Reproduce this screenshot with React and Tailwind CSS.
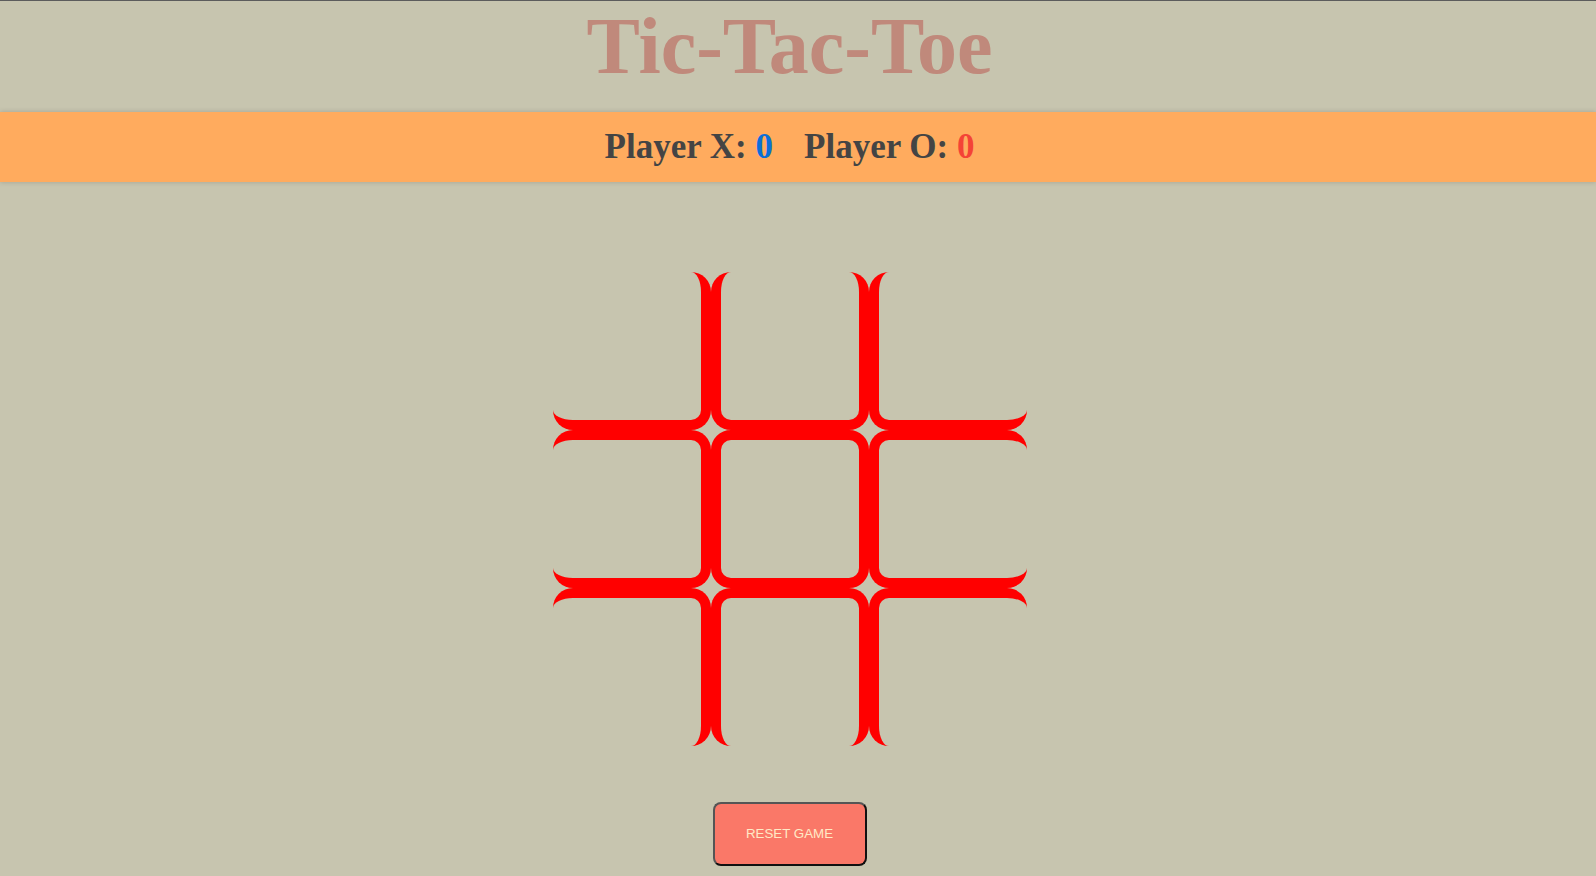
import React, { useState } from "react";

const serif = { fontFamily: '"Liberation Serif", "Times New Roman", serif' };

// which sides of each cell carry the red line
const cellBorders = [
  "border-r-[10px] border-b-[10px]",
  "border-l-[10px] border-r-[10px] border-b-[10px]",
  "border-l-[10px] border-b-[10px]",
  "border-t-[10px] border-r-[10px] border-b-[10px]",
  "border-[10px]",
  "border-t-[10px] border-l-[10px] border-b-[10px]",
  "border-t-[10px] border-r-[10px]",
  "border-t-[10px] border-l-[10px] border-r-[10px]",
  "border-t-[10px] border-l-[10px]",
];

export default function App() {
  const [board, setBoard] = useState(Array(9).fill(null));
  const [scores, setScores] = useState({ X: 0, O: 0 });

  const reset = () => setBoard(Array(9).fill(null));

  return (
    <div className="min-h-screen bg-[#c7c5af] border-t border-[#5c5c5c]" style={serif}>
      <div className="pr-[17px] flex justify-center">
        <h1 className="m-0 text-[80px] leading-[90px] font-bold text-[#c0897b]">
          Tic-Tac-Toe
        </h1>
      </div>

      <div className="mt-[21px] h-[70px] bg-[#ffab5e] shadow-[0_0_5px_rgba(0,0,0,0.18)] pr-[17px] flex items-center justify-center gap-[31px] text-[35px] font-bold text-[#444444]">
        <span>
          Player X: <span className="text-[#0b6fd6]">{scores.X}</span>
        </span>
        <span>
          Player O: <span className="text-[#f44336]">{scores.O}</span>
        </span>
      </div>

      <div className="pr-[17px] pt-[90px] flex flex-col items-center">
        <div className="grid grid-cols-3 grid-rows-3 w-[474px] h-[474px]">
          {board.map((v, i) => (
            <div
              key={i}
              className={`box-border border-[#ff0000] rounded-[20px] flex items-center justify-center ${cellBorders[i]}`}
            >
              {v}
            </div>
          ))}
        </div>

        <button
          onClick={reset}
          className="mt-[56px] w-[154px] h-[64px] rounded-[8px] bg-[#fa7868] border-2 border-[#555555] border-r-[#111111] border-b-[#111111] text-[13.33px] text-[#ffe9c6] uppercase"
          style={{ fontFamily: '"Liberation Sans", Arial, sans-serif' }}
        >
          Reset Game
        </button>
      </div>
    </div>
  );
}
